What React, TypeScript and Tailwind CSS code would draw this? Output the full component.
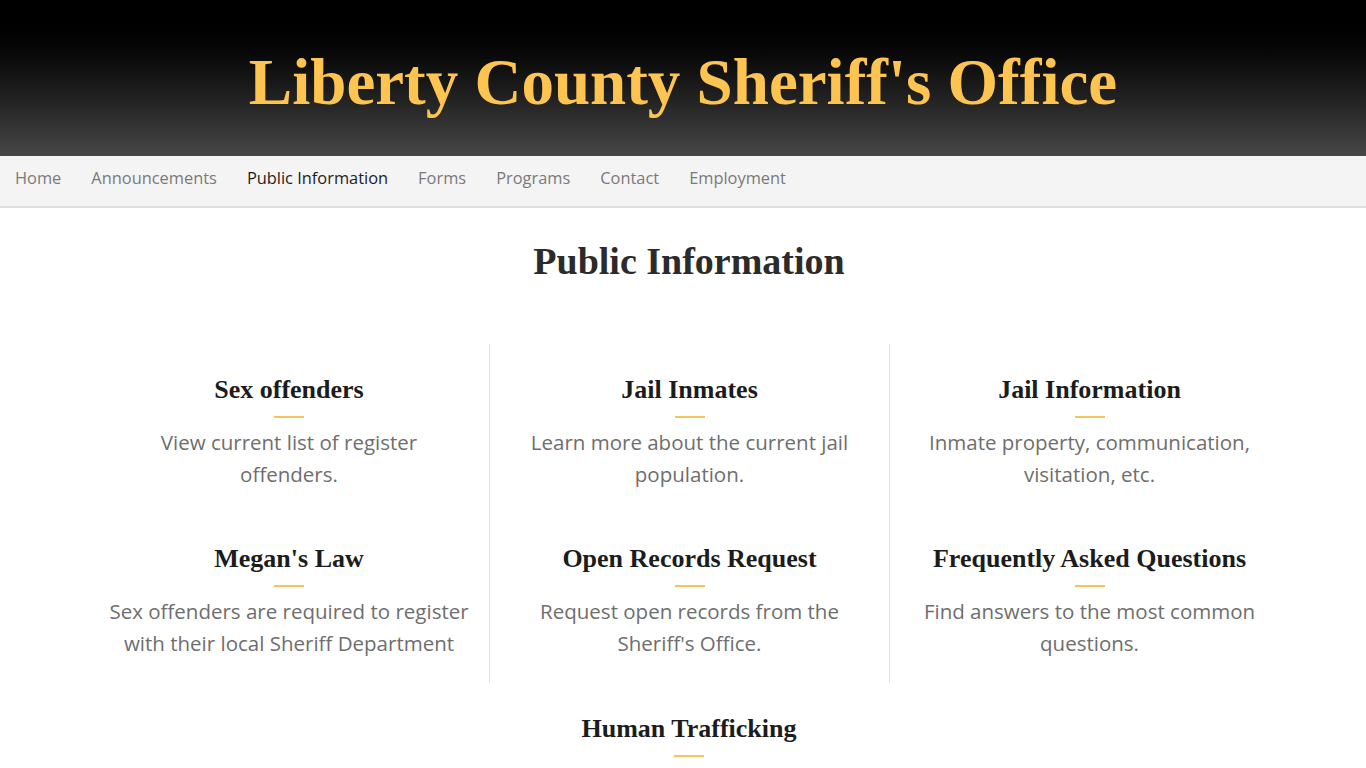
import React from "react";

type Item = {
  title: string;
  lines: string[];
};

const columns: Item[][] = [
  [
    { title: "Sex offenders", lines: ["View current list of register", "offenders."] },
    { title: "Megan's Law", lines: ["Sex offenders are required to register", "with their local Sheriff Department"] },
  ],
  [
    { title: "Jail Inmates", lines: ["Learn more about the current jail", "population."] },
    { title: "Open Records Request", lines: ["Request open records from the", "Sheriff's Office."] },
  ],
  [
    { title: "Jail Information", lines: ["Inmate property, communication,", "visitation, etc."] },
    { title: "Frequently Asked Questions", lines: ["Find answers to the most common", "questions."] },
  ],
];

const navLinks = ["Home", "Announcements", "Public Information", "Forms", "Programs", "Contact", "Employment"];

const InfoBlock = ({ item }: { item: Item }) => (
  <div className="flex flex-col items-center text-center">
    <h3 className="font-['Liberation_Serif',serif] font-bold text-[26px] leading-[29px] text-[#1c1c1c]">
      {item.title}
    </h3>
    <span className="mt-[12px] block w-[30px] h-[2px] bg-[#f6c459]" />
    {item.lines.length > 0 && (
      <p className="mt-[8px] font-['Open_Sans',sans-serif] text-[20.5px] leading-[32px] text-[#6e6e6e]">
        {item.lines.map((line, i) => (
          <React.Fragment key={i}>
            {line}
            {i < item.lines.length - 1 && <br />}
          </React.Fragment>
        ))}
      </p>
    )}
  </div>
);

export default function App() {
  return (
    <div className="min-h-screen bg-white">
      {/* Header */}
      <header className="h-[156px] flex items-center justify-center bg-gradient-to-b from-[#000000] to-[#474747]">
        <h1 className="font-['Liberation_Serif',serif] font-bold text-[65px] leading-[72px] text-[#fec451] mt-[8px]">
          Liberty County Sheriff's Office
        </h1>
      </header>

      {/* Navigation */}
      <nav className="h-[52px] bg-[#f4f4f4] border-b-2 border-[#dedede] flex items-center pb-[5px]">
        {navLinks.map((link) => (
          <a
            key={link}
            href="#"
            className={`px-[15px] font-['Open_Sans',sans-serif] text-[16.4px] ${
              link === "Public Information" ? "text-[#1e1e1e]" : "text-[#7a7a7a]"
            }`}
          >
            {link}
          </a>
        ))}
      </nav>

      {/* Content */}
      <main className="pl-[12px]">
        <div className="mx-auto w-[1200px]">
          <h2 className="mt-[31px] text-center font-['Liberation_Serif',serif] font-bold text-[38px] leading-[44px] text-[#2b2b2b]">
            Public Information
          </h2>

          <div className="mt-[61px] grid grid-cols-3">
            {columns.map((col, ci) => (
              <div
                key={ci}
                className={`flex flex-col gap-[54px] pt-[31px] pb-[24px] ${ci > 0 ? "border-l border-[#e4e4e4]" : ""}`}
              >
                {col.map((item) => (
                  <InfoBlock key={item.title} item={item} />
                ))}
              </div>
            ))}
          </div>

          <div className="pt-[31px] pb-[24px]">
            <InfoBlock item={{ title: "Human Trafficking", lines: [] }} />
          </div>
        </div>
      </main>
    </div>
  );
}
